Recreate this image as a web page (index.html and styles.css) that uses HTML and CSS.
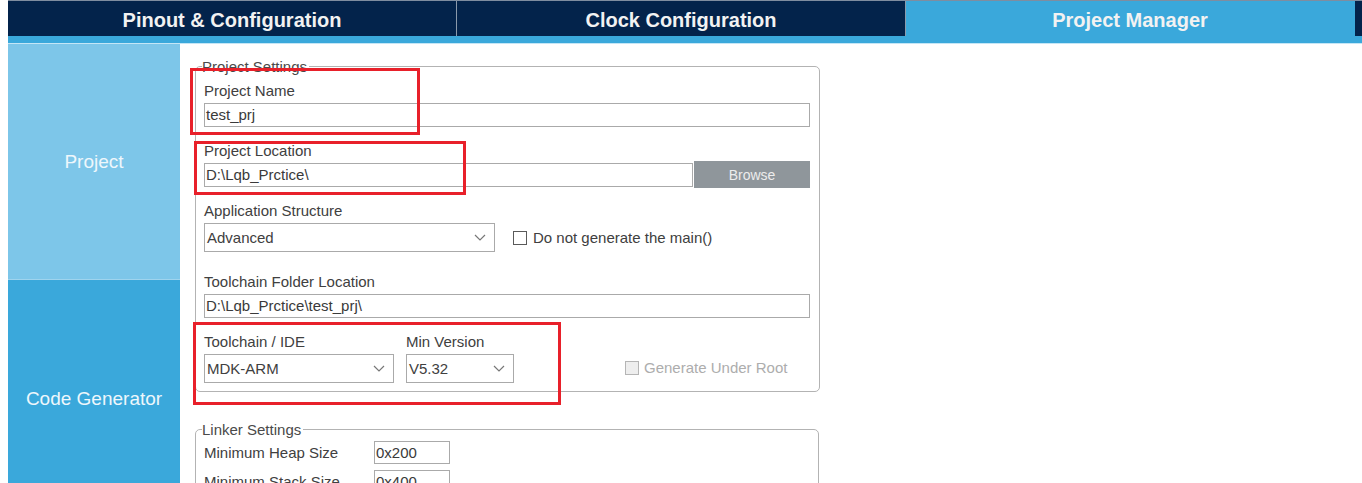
FILE: index.html
```html
<!DOCTYPE html>
<html lang="en">
<head>
<meta charset="UTF-8">
<title>Project Manager</title>
<link rel="stylesheet" href="styles.css">
</head>
<body>
<nav class="tabs">
<a class="tab">Pinout &amp; Configuration</a>
<a class="tab">Clock Configuration</a>
<a class="tab active">Project Manager</a>
</nav>
<div class="strip"></div>
<div class="main">
<aside class="sidebar">
<div class="side-item project">Project</div>
<div class="side-item codegen">Code Generator</div>
</aside>
<div class="content">
<fieldset class="group settings">
<legend>Project Settings</legend>
<div class="field">
<label>Project Name</label>
<div class="input wide">test_prj</div>
</div>
<div class="field">
<label>Project Location</label>
<div class="row">
<div class="input loc">D:\Lqb_Prctice\</div>
<button class="browse">Browse</button>
</div>
</div>
<div class="field app">
<label>Application Structure</label>
<div class="row">
<div class="select app-select"><span>Advanced</span><svg width="12" height="7" viewBox="0 0 12 7"><path d="M1 1 L6 6 L11 1" fill="none" stroke="#777" stroke-width="1.2"/></svg></div>
<span class="check"><span class="box"></span>Do not generate the main()</span>
</div>
</div>
<div class="field">
<label>Toolchain Folder Location</label>
<div class="input wide">D:\Lqb_Prctice\test_prj\</div>
</div>
<div class="row toolchain">
<div class="field">
<label>Toolchain / IDE</label>
<div class="select ide-select"><span>MDK-ARM</span><svg width="12" height="7" viewBox="0 0 12 7"><path d="M1 1 L6 6 L11 1" fill="none" stroke="#777" stroke-width="1.2"/></svg></div>
</div>
<div class="field">
<label>Min Version</label>
<div class="select ver-select"><span>V5.32</span><svg width="12" height="7" viewBox="0 0 12 7"><path d="M1 1 L6 6 L11 1" fill="none" stroke="#777" stroke-width="1.2"/></svg></div>
</div>
<span class="check disabled"><span class="box"></span>Generate Under Root</span>
</div>
</fieldset>

<fieldset class="group linker">
<legend>Linker Settings</legend>
<div class="lrow"><label>Minimum Heap Size</label><div class="input small">0x200</div></div>
<div class="lrow"><label>Minimum Stack Size</label><div class="input small">0x400</div></div>
</fieldset>

<div class="mark mark1"></div>
<div class="mark mark2"></div>
<div class="mark mark3"></div>
</div>
</div>
</body>
</html>
```

FILE: styles.css
```css
body {
font-family: "Liberation Sans", Arial, sans-serif;
margin: 0;
padding: 0 0 0 8px;
background: #fff;
color: #404040;
overflow: hidden;
height: 483px;
}
.tabs {
display: flex;
height: 36px;
background: #03234b;
border-top: 1px solid #7f8da0;
box-sizing: border-box;
}
.tab {
width: 449px;
box-sizing: border-box;
border-right: 1px solid #8a99ab;
color: #f2f2f2;
font-size: 20px;
font-weight: bold;
text-align: center;
line-height: 38px;
}
.tab.active {
background: #3aa8db;
border-right: 1px solid #3aa8db;
}
.strip {
height: 7px;
background: #3aa8db;
border-bottom: 1px solid #c4e6f6;
}
.main {
display: flex;
height: 480px;
}
.sidebar {
width: 172px;
display: flex;
flex-direction: column;
}
.side-item {
display: flex;
align-items: center;
justify-content: center;
color: #eef7fc;
font-size: 19px;
height: 236px;
}
.project {
background: #7dc6e9;
border-bottom: 1px solid #9fd4ee;
box-sizing: border-box;
}
.codegen {
background: #3aa8db;
height: 238px;
}
.content {
position: relative;
padding: 14px 0 0 15px;
}
.group {
width: 624px;
box-sizing: border-box;
margin: 0;
border: 1px solid #b3b3b3;
border-radius: 5px;
padding: 7px 9px 8px 8px;
font-size: 15px;
}
.group legend {
padding: 0 2px 0 0;
margin-left: -2px;
line-height: 17px;
color: #4a4a4a;
}
.field label {
display: block;
line-height: 18px;
margin-bottom: 3px;
}
.field {
margin-bottom: 15px;
}
.field.app {
margin-bottom: 21px;
}
.row {
display: flex;
align-items: center;
}
.input {
height: 24px;
box-sizing: border-box;
border: 1px solid #aaaaaa;
padding: 0 1px;
line-height: 22px;
color: #3a3a3a;
white-space: nowrap;
}
.wide {
width: 606px;
}
.loc {
width: 489px;
}
.browse {
width: 116px;
height: 27px;
margin: -2px 0 -1px 1px;
border: none;
background: #8f969b;
color: #ececec;
font-family: inherit;
font-size: 14px;
}
.select {
height: 29px;
box-sizing: border-box;
border: 1px solid #aaaaaa;
display: flex;
align-items: center;
justify-content: space-between;
padding: 0 8px 0 2px;
}
.app-select {
width: 291px;
}
.ide-select {
width: 190px;
}
.ver-select {
width: 108px;
}
.check {
display: flex;
align-items: center;
margin-left: 18px;
}
.check .box {
width: 14px;
height: 14px;
box-sizing: border-box;
border: 1px solid #5a5a5a;
margin-right: 6px;
}
.toolchain {
align-items: flex-end;
}
.toolchain .field {
margin-bottom: 0;
margin-right: 12px;
}
.check.disabled {
color: #adadad;
margin: 0 0 7px 99px;
}
.check.disabled .box {
border-color: #b5b5b5;
background: #eeeeee;
margin-right: 5px;
}
.linker {
margin-top: 29px;
padding: 3px 9px 8px 8px;
}
.lrow {
display: flex;
align-items: center;
margin-bottom: 6px;
}
.lrow label {
width: 170px;
}
.small {
width: 76px;
height: 23px;
}
.mark {
position: absolute;
border: 3px solid #e8202a;
}
.mark1 {
left: 10px;
top: 24px;
width: 224px;
height: 61px;
}
.mark2 {
left: 14px;
top: 97px;
width: 266px;
height: 48px;
}
.mark3 {
left: 13px;
top: 278px;
width: 362px;
height: 77px;
}
```
